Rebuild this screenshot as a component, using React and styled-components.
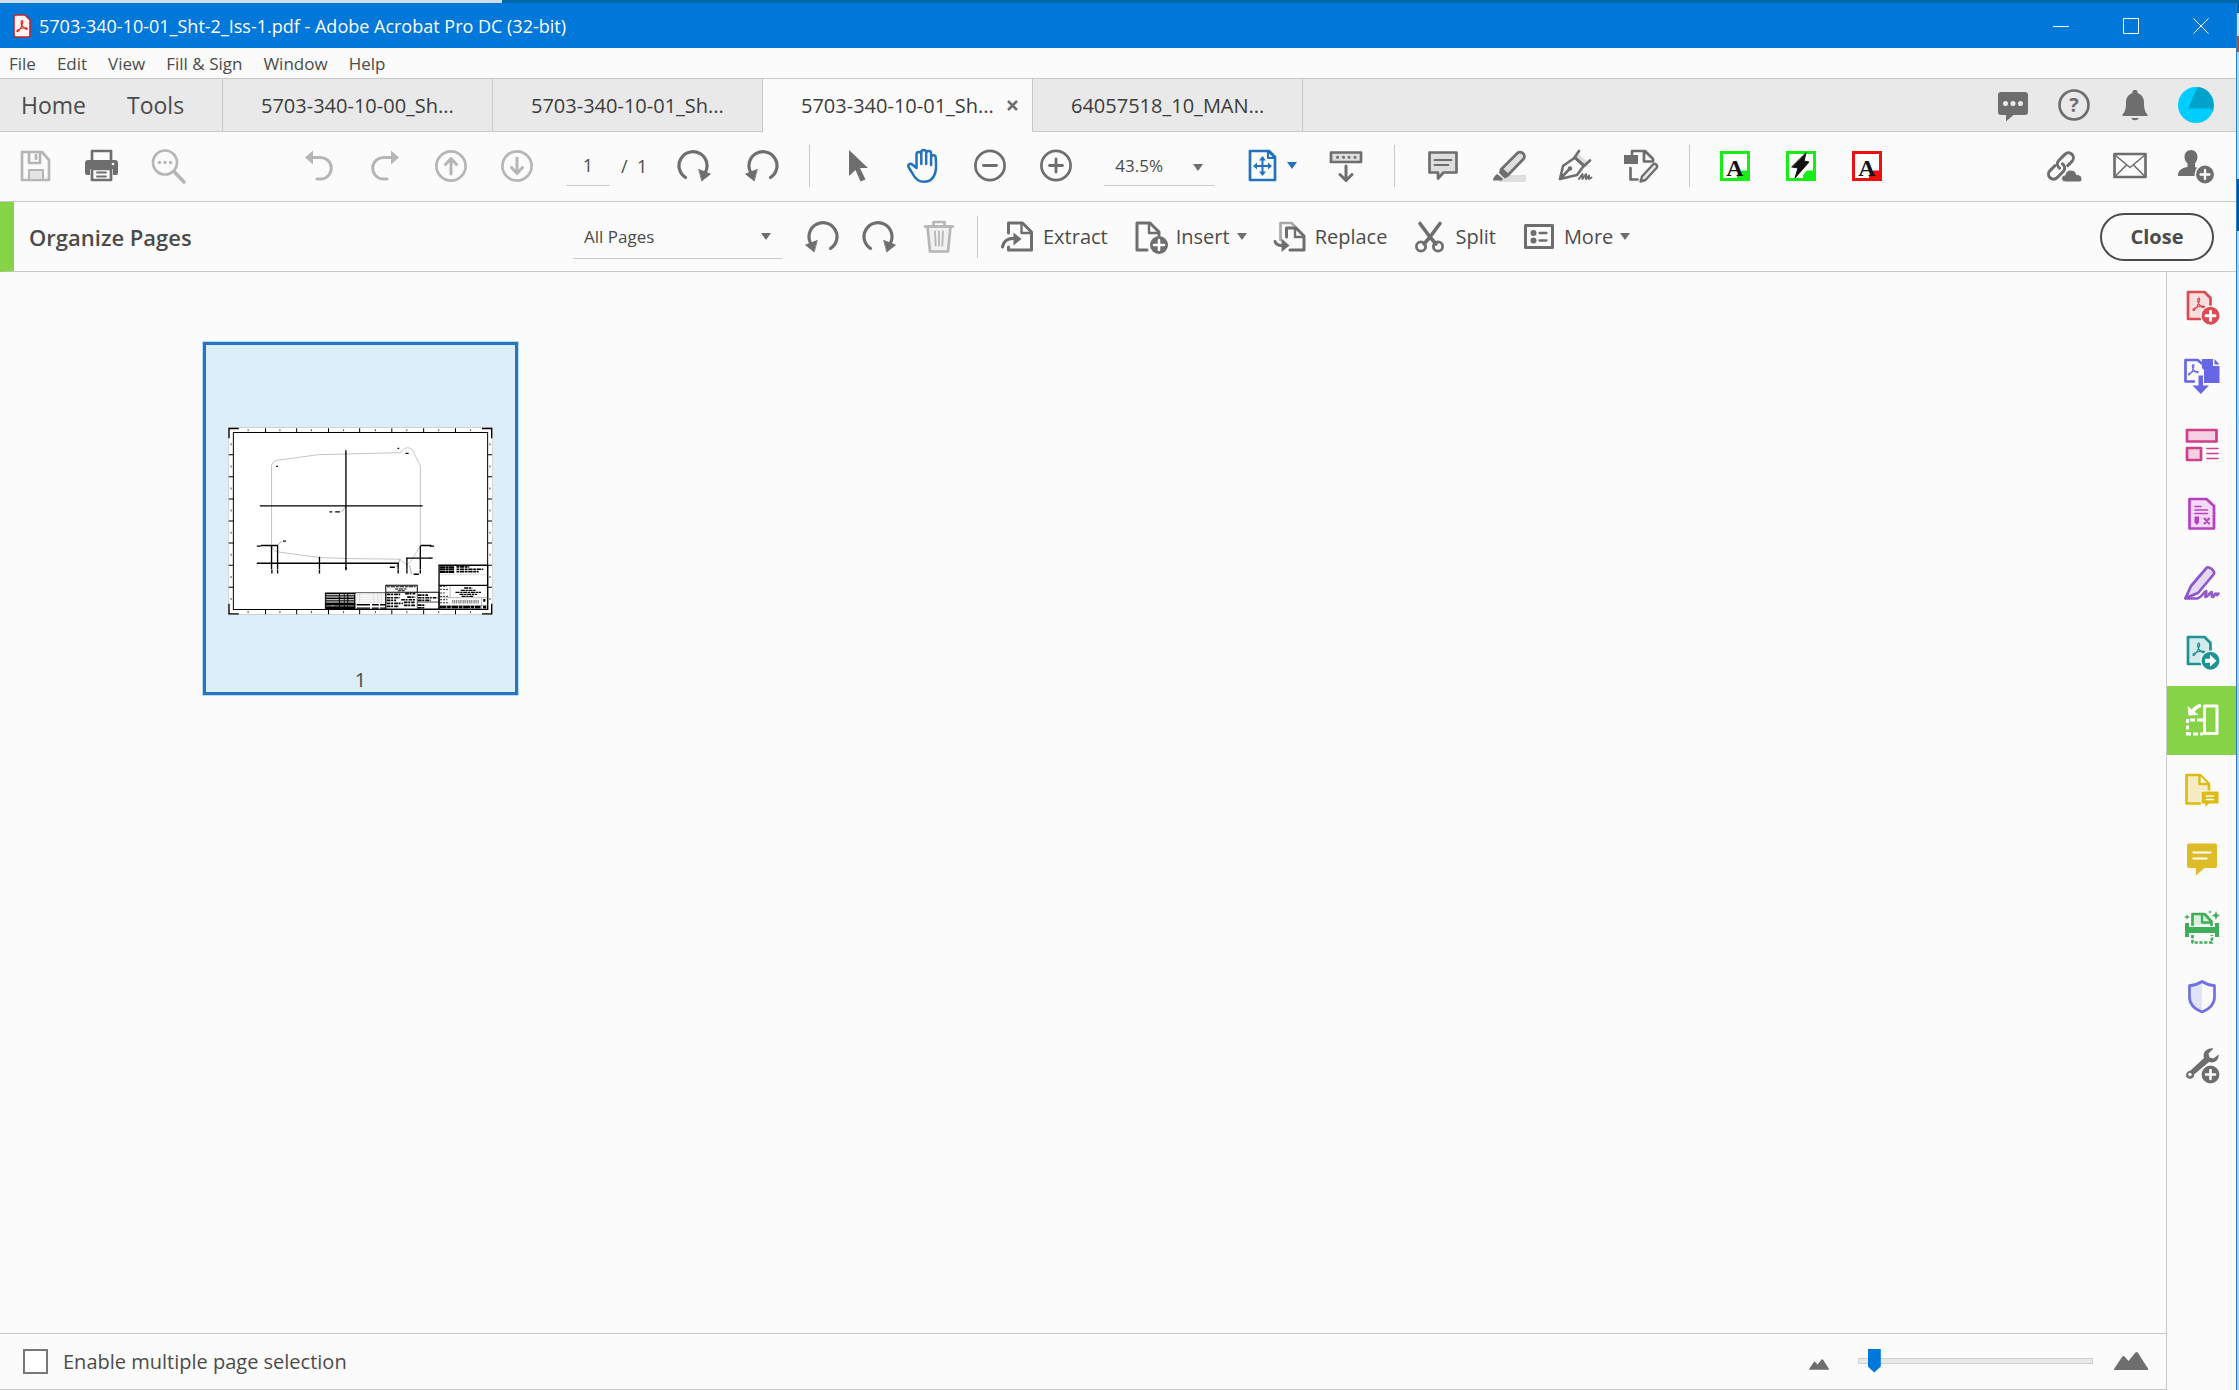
import React, { useState } from "react"
import styled, { createGlobalStyle, css } from "styled-components"

const GlobalStyle = createGlobalStyle`
  * {
    box-sizing: border-box;
  }
  body {
    margin: 0;
    background: #fbfbfb;
    color: #4b4b4b;
    font-family: "Segoe UI", "Open Sans", "Noto Sans", sans-serif;
  }
  button,
  input,
  select {
    font: inherit;
    color: inherit;
  }
`

/* ---------- icons ---------- */

const GREY = "#6e6e6e"
const PALE = "#b6b6b6"

const Icon = ({ children, color = GREY, size = 36 }) => (
  <svg
    width={size}
    height={size}
    viewBox="0 0 36 36"
    fill="none"
    stroke={color}
    strokeWidth="2.7"
    strokeLinecap="round"
    strokeLinejoin="round"
    aria-hidden="true"
  >
    {children}
  </svg>
)

const Caret = ({ color = GREY }) => (
  <svg width="10" height="7" viewBox="0 0 10 7" aria-hidden="true">
    <path d="M0 0h10L5 7z" fill={color} />
  </svg>
)

// the three looped Acrobat mark, drawn in a 14 x 14 field
const AcrobatMark = ({ x, y, scale = 1 }) => (
  <path
    transform={`translate(${x} ${y}) scale(${scale})`}
    strokeWidth="1.3"
    d="M6 1.2c1.2-1.4 2 .2 1.4 2.2C6.6 6.6 4.6 10.5 2.4 12.6c-1.6 1-2-.6-.4-1.6C4.4 9.5 8 8.5 11 8.6c2.4.2 2 2 .2 1.6C8.6 9.4 6 6 5.8 3.6c-.2-1 0-1.8.2-2.4z"
  />
)

const Save = () => (
  <Icon color={PALE}>
    <path d="M4 4h20l7 8v20H4z" />
    <path d="M11 4v11h11V4M18 7v4" />
    <path d="M11 32V22h14v10z" fill="#e4e4e4" strokeWidth="2" />
  </Icon>
)

const Print = () => (
  <Icon>
    <path d="M8 12V3h19v9" />
    <path
      d="M4 12h27a3 3 0 0 1 3 3v10a2 2 0 0 1-2 2h-3v-6H6v6H3a2 2 0 0 1-2-2V15a3 3 0 0 1 3-3z"
      fill={GREY}
      stroke="none"
    />
    <path d="M8 21h19v11H8z" />
    <path d="M13 24.5h9M13 28.5h9" strokeWidth="1.8" />
    <circle cx="29" cy="16" r="1.3" fill="#fff" stroke="none" />
  </Icon>
)

const Find = () => (
  <Icon color={PALE}>
    <circle cx="15" cy="14.5" r="12" />
    <path d="M24 23.5L34 34" strokeWidth="3.6" />
    <g fill={PALE} stroke="none">
      <circle cx="9.5" cy="14.5" r="1.7" />
      <circle cx="15" cy="14.5" r="1.7" />
      <circle cx="20.5" cy="14.5" r="1.7" />
    </g>
  </Icon>
)

const Undo = ({ flip }) => (
  <Icon color={PALE}>
    <g transform={flip ? "matrix(-1 0 0 1 36 0)" : undefined}>
      <path d="M9 9.5h9.5a10.5 10.5 0 0 1 2 21.5H16" strokeWidth="3" />
      <path d="M4 9.5L12 2.5v14z" fill={PALE} stroke="none" />
    </g>
  </Icon>
)

const CircleArrow = ({ down }) => (
  <Icon color={PALE}>
    <circle cx="18" cy="18" r="14.6" />
    <path
      d={down ? "M18 10v15M12.5 19.5L18 25.5l5.5-6" : "M18 26V11M12.5 16.5L18 10.5l5.5 6"}
      strokeWidth="3"
    />
  </Icon>
)

const Rotate = ({ left }) => (
  <Icon>
    <g transform={left ? "matrix(-1 0 0 1 36 0)" : undefined}>
      <path d="M8.5 29.5A14 14 0 1 1 28.5 24" strokeWidth="3.2" />
      <path d="M22 21.5L33.5 26 25 32.8z" fill={GREY} strokeWidth=".8" />
    </g>
  </Icon>
)

const Pointer = () => (
  <Icon>
    <path d="M9 2l19 18h-8l5.5 11.5-5 2-5-11.5L9 28z" fill={GREY} stroke="none" />
  </Icon>
)

const Hand = () => (
  <Icon color="#2272bf">
    <path
      strokeWidth="2.5"
      d="M10.5 20V6.5a2.4 2.4 0 0 1 4.8 0V16V4.5a2.4 2.4 0 0 1 4.9 0V16V5.5a2.4 2.4 0 0 1 4.9 0V17V9.5a2.3 2.3 0 0 1 4.6 0c.4 5 1 11-.7 16-1.6 5-5.5 8.3-11 8.3-6 0-9-3.3-11.5-8.3L2.5 19c-1-2.6 2-4.2 4-2.2z"
    />
  </Icon>
)

const Zoom = ({ plus }) => (
  <Icon>
    <circle cx="18" cy="17.5" r="14.6" />
    <path d={plus ? "M11.5 17.5h13M18 11v13" : "M11.5 17.5h13"} strokeWidth="2.8" />
  </Icon>
)

const FitPage = () => (
  <Icon color="#2272bf">
    <path d="M5 3h19l6 6v23H5z" />
    <path d="M23 3v7h7z" strokeWidth="2.2" fill="#fff" />
    <path d="M17.5 11v14M10.5 18h14" strokeWidth="2" />
    <path
      d="M17.5 8l3.5 4.5h-7zM17.5 28l3.5-4.5h-7zM8 18l4-3.5v7zM27 18l-4-3.5v7z"
      fill="#2272bf"
      stroke="none"
    />
  </Icon>
)

const ScrollMode = () => (
  <Icon>
    <path d="M3 4.5h30v9.5H3z" fill="#dedede" />
    <path d="M9.5 9.3h.1M15.5 9.3h.1M21 9.3h.1M27 9.3h.1" strokeWidth="3" />
    <path d="M18 18v13M12 26.5l6 6 6-6" strokeWidth="3" />
  </Icon>
)

const Comment = () => (
  <Icon>
    <path d="M4.5 4.5h27v20h-13L13 30.5v-6H4.5z" fill="#dedede" />
    <path d="M9.5 12h17M9.5 17h14" strokeWidth="1.8" />
  </Icon>
)

const Highlighter = () => (
  <Icon>
    <path d="M10 27h25v7H8z" fill="#dedede" stroke="none" />
    <path d="M26 5.5c3-4 10 1 6.5 5.5L17 27l-6.5-6z" fill="#dedede" />
    <path
      d="M9 20l9 8-4 2.5-6-5.5zM6.5 26l5.5 5-1 1.5H2c0-2.5 2-5.5 4.5-6.5z"
      fill={GREY}
      stroke="none"
    />
  </Icon>
)

const InkPen = () => (
  <Icon>
    <path d="M21 6l10 8-2 5-12-9z" fill="#dedede" stroke="none" />
    <path d="M3 31L6 18l12-8.5 9 8L20 27zM3 31l9-9.5" strokeWidth="2.6" />
    <path d="M22 3l-4.5 6.5 9.5 8.5 6-5.5" />
    <circle cx="13" cy="20.5" r="2.2" fill={GREY} stroke="none" />
    <path d="M22 31l3.5-5v5l3.5-5v5l3-3.5v3.5l2.5-1.5" strokeWidth="2" />
  </Icon>
)

const StampPen = () => (
  <Icon>
    <path d="M9 6V3h13l8 8v2.5h-9V3.5" />
    <path d="M1 7h14v9H1z" fill={GREY} stroke="none" />
    <path d="M7.5 20v11.5h7" />
    <path
      d="M30 16.5c2-2 5.5 1 3.5 3.5L22.5 32l-5 1.5 1.5-5z"
      fill="#e8e8e8"
      strokeWidth="2.4"
    />
  </Icon>
)

const PluginMark = ({ color, bolt }) => (
  <Icon color={color}>
    <path d="M4.5 4.5h27v27h-27z" fill="#fff" strokeLinejoin="miter" strokeWidth="3" />
    <path d="M31.5 31.5H20V27l4-4.5h7.5z" fill={color} stroke="none" />
    {bolt ? (
      <path d="M23 5l-2 8 5 1-14 16 3-10-6-1z" fill="#111" stroke="#111" strokeWidth="1" />
    ) : (
      <text
        x="18"
        y="28"
        textAnchor="middle"
        fontFamily="Liberation Serif, serif"
        fontWeight="700"
        fontSize="24"
        fill="#111"
        stroke="none"
      >
        A
      </text>
    )}
  </Icon>
)

const LinkCloud = () => (
  <Icon>
    <g transform="rotate(-45 15 18)" strokeWidth="3">
      <path d="M11 13.5H4a5 5 0 0 0 0 10h9a5 5 0 0 0 4.5-6" />
      <path d="M20 22.5h6a5 5 0 0 0 0-10h-9a5 5 0 0 0-4.5 6" />
    </g>
    <path
      d="M19 34a3.5 3.5 0 0 1 0-7c1-4 4-5 6-5 3 0 5 2 5.5 4.5C34 26.5 36 28 36 31c0 2-1 3-3 3z"
      fill={GREY}
      stroke="#fbfbfb"
      strokeWidth="1"
    />
  </Icon>
)

const Mail = () => (
  <Icon>
    <path d="M2.5 6h31v23h-31z" />
    <path d="M3 7l15 12.5L33 7M3 28.5l11-11M33 28.5l-11-11" strokeWidth="1.6" />
  </Icon>
)

const AddPerson = () => (
  <Icon>
    <path
      d="M13 2c4 0 6.5 3 6.5 7 0 3-1.5 5-2.5 6.5V19c4 1 7 2.5 7 6v3H0c0-5 2-7.5 9.5-9v-3.5C8 14 6.5 12 6.5 9c0-4 2.5-7 6.5-7z"
      fill={GREY}
      stroke="none"
    />
    <circle cx="27" cy="26.5" r="9.7" fill={GREY} stroke="#fbfbfb" strokeWidth="1.5" />
    <path d="M22.5 26.5h9M27 22v9" stroke="#fff" strokeWidth="2.3" />
  </Icon>
)

const Trash = () => (
  <Icon color={PALE}>
    <path d="M6.5 7.5l2.5 25h18l2.5-25z" fill="#f0f0f0" />
    <path d="M4 7.5h28M12.5 7V3h11v4" />
    <path d="M14 12.5l.7 14M18 12.5v14M22 12.5l-.7 14" strokeWidth="1.8" />
  </Icon>
)

const Extract = () => (
  <Icon>
    <path d="M8.5 14V4h14l9 9v18h-23v-3" strokeWidth="3" />
    <path d="M21.5 4.5v9.5h9.5" strokeWidth="2.4" />
    <path d="M2.5 28c1-6 6-9 12-8.5" strokeWidth="3.2" />
    <path d="M13.5 13.5L21.5 20l-8 6.5z" fill={GREY} stroke="none" />
  </Icon>
)

const Insert = () => (
  <Icon>
    <path d="M14 31H4V4h13l9 9v3" strokeWidth="3" />
    <path d="M16 4.5V14h9.5" strokeWidth="2.4" />
    <circle cx="26" cy="26" r="9" fill={GREY} stroke="none" />
    <path d="M21 26h10M26 21v10" stroke="#fff" strokeWidth="2.6" />
  </Icon>
)

const Replace = () => (
  <Icon>
    <path d="M8.5 21V4h11l4 4" stroke="#a8a8a8" />
    <path d="M14.5 18v-9h9.5l8 8v14H18" strokeWidth="3" />
    <path d="M23 9.5v8.5h8.5" strokeWidth="2.4" />
    <path d="M3 22.5c1 3 4 4 7 4" strokeWidth="3" />
    <path d="M9.5 19.5l8 7-8 6.5z" fill={GREY} stroke="none" />
  </Icon>
)

const Split = () => (
  <Icon>
    <path d="M8 4.5L18 18l6 7M28 4.5L18 18l-6 7" strokeWidth="3.6" />
    <circle cx="9" cy="27.5" r="4.6" strokeWidth="2.8" />
    <circle cx="26" cy="27.5" r="4.6" strokeWidth="2.8" />
  </Icon>
)

const More = () => (
  <Icon>
    <path d="M4.5 6.5h27v22h-27z" strokeWidth="3" />
    <path d="M18.5 14h7M18.5 21.5h7" strokeWidth="2.3" />
    <circle cx="12.5" cy="14" r="3" fill={GREY} stroke="none" />
    <circle cx="12.5" cy="21.5" r="3" fill={GREY} stroke="none" />
  </Icon>
)

const Chat = () => (
  <Icon>
    <path
      d="M6 5h24q3 0 3 3v17q0 3-3 3H18.5L11 34.5V28H6q-3 0-3-3V8q0-3 3-3z"
      fill={GREY}
      stroke="none"
    />
    <g fill="#ececec" stroke="none">
      <circle cx="10.5" cy="16.5" r="2.5" />
      <circle cx="18" cy="16.5" r="2.5" />
      <circle cx="25.5" cy="16.5" r="2.5" />
    </g>
  </Icon>
)

const Help = () => (
  <Icon>
    <circle cx="18" cy="18" r="14.5" />
    <text
      x="18"
      y="25"
      textAnchor="middle"
      fontFamily="Open Sans, sans-serif"
      fontWeight="700"
      fontSize="20"
      fill={GREY}
      stroke="none"
    >
      ?
    </text>
  </Icon>
)

const Bell = () => (
  <Icon>
    <path
      d="M15.5 4.5c0-2 5-2 5 0V6c5 2 6.5 5 6.5 10 0 6 1 9 3.5 11.5V29h-25v-1.5C8 25 9 22 9 16c0-5 1.5-8 6.5-10zM14.5 31h7c0 3-7 3-7 0z"
      fill={GREY}
      stroke="none"
    />
  </Icon>
)

const AvatarMark = () => (
  <Icon>
    <circle cx="18" cy="18" r="18" fill="#00cdff" stroke="none" />
    <path d="M10 21.5L19.5 0C32 1 37.5 13 35 24l-2-2.5z" fill="#00a4cb" stroke="none" />
  </Icon>
)

const CreatePdf = () => (
  <Icon color="#dc4a52">
    <path d="M4 3h16.5l6 6v21H4z" fill="#f9dddf" />
    <AcrobatMark x="8" y="8.5" />
    <circle cx="26.5" cy="26.7" r="9.6" fill="#dc4a52" stroke="#fbfbfb" strokeWidth="1.3" />
    <path d="M22 26.7h9M26.5 22.2v9" stroke="#fff" strokeWidth="3" />
  </Icon>
)

const CombinePdf = () => (
  <Icon color="#6666e6">
    <path d="M10 23.5H1.5V2h12l5 4" />
    <AcrobatMark x="3.5" y="6" scale={0.85} />
    <path d="M18 1h11v7h6.5v17H20V12l-2-2zM30.5 1l5 5.5h-5z" fill="#6666e6" stroke="none" />
    <path d="M14.5 17.5H19v10h6L16.8 36l-8.3-8.5h6z" fill="#6666e6" stroke="none" />
  </Icon>
)

const EditPdf = () => (
  <Icon color="#cf3f8c">
    <path d="M3 3h29.5v11.5H3zM3 21h14v12H3z" fill="#f4d0e3" />
    <path d="M23 21.5h11M23 26.5h11M23 31.5h11" strokeWidth="1.6" />
  </Icon>
)

const PrepareForm = () => (
  <Icon color="#b83fc4">
    <path d="M5.5 3h17l7.5 7v22.5H5.5z" fill="#f3daf6" />
    <path d="M11 10.5h6M11 14h12.5M11 17.5h12.5" strokeWidth="1.5" />
    <path d="M10.5 20.5h4.5v6L12.8 29l-2.3-2.5z" fill="#b83fc4" stroke="none" />
    <path d="M20.5 22.5l4.5 5M25 22.5l-4.5 5" strokeWidth="2" />
  </Icon>
)

const FillSign = () => (
  <Icon color="#8e57cc">
    <path d="M1.5 33L7 21 22.5 3c2-2.5 9.5 3 7 6.5L14 28z" fill="#e6d9f4" />
    <path
      d="M1.5 33.5h11c5 0 8-8 9.5-7.5 1.5.7-2 6 0 6s4-5.5 5.5-5-1 5 1 5 2-4 3.5-3.5 0 3.5 2.5 0"
      strokeWidth="2.6"
    />
  </Icon>
)

const ExportPdf = () => (
  <Icon color="#1f9296">
    <path d="M4 3h16.5l6 6v21H4z" fill="#d3ebeb" />
    <AcrobatMark x="8" y="8.5" />
    <circle cx="26.5" cy="26.7" r="9.6" fill="#1f9296" stroke="#fbfbfb" strokeWidth="1.3" />
    <path d="M21 24.7h5v-4l6.5 6-6.5 6v-4h-5z" fill="#fff" stroke="none" />
  </Icon>
)

const Organize = () => (
  <Icon color="#fff">
    <path d="M20.5 3H33v27.5H20.5z" strokeWidth="3" />
    <path
      d="M3.5 16v4M3.5 22.5v4M3.5 29v3M2 31h5M9 31h5M16 31h3M6 17h5M13 17h6"
      strokeLinecap="butt"
      strokeWidth="3"
    />
    <path d="M17 2.5C13 3 11 5 8.5 8.5" strokeWidth="3.6" strokeLinecap="butt" />
    <path d="M3.5 3l1 9.5 10-.5z" fill="#fff" stroke="none" />
  </Icon>
)

const SendComments = () => (
  <Icon color="#dfba10">
    <path d="M16 31.5H2.5V3H16l9 9v7" fill="#f5ebc2" />
    <path d="M15.5 3.5V12H24" strokeWidth="2.4" fill="#fff" />
    <path
      d="M18.5 19h15q1.5 0 1.5 1.5v10q0 1.5-1.5 1.5H25l-4 4v-4h-2.5q-1.5 0-1.5-1.5v-10q0-1.5 1.5-1.5z"
      fill="#dfba10"
      stroke="#fbfbfb"
      strokeWidth="1"
    />
    <path d="M22.5 24h7M22.5 27.5h7" stroke="#fff" strokeWidth="1.7" />
  </Icon>
)

const CommentTool = () => (
  <Icon color="#dfbb28">
    <path
      d="M5 2.5h26q2 0 2 2V25q0 2-2 2H20.5L12 34.5V27H5q-2 0-2-2V4.5q0-2 2-2z"
      fill="#dfbb28"
      stroke="none"
    />
    <path d="M9.5 11.5h17M9.5 17.5h13" stroke="#fff" strokeWidth="2.2" />
  </Icon>
)

const ScanOcr = () => (
  <Icon color="#3fae58">
    <path d="M8.5 15V4h12l7 7.5V15" fill="#d6efdb" />
    <path d="M18 4.5v8h8.5" strokeWidth="2.3" />
    <path d="M1 13h4v4h26v-4h4v14h-4v-4H5v4H1z" fill="#3fae58" stroke="none" />
    <path d="M8.5 25v7.5H28V25" strokeDasharray="3.2 1.6" strokeLinecap="butt" />
    <path
      d="M32 1l1.2 3.3L36 5.5l-2.8 1.2L32 10l-1.2-3.3-3.3-1.2 3.3-1.2zM26 0l.6 1.4L28 2l-1.4.6L26 4l-.6-1.4L24 2l1.4-.6zM3 4l.7 2L6 7l-2.3 1L3 10l-.7-2L0 7l2.3-1z"
      fill="#3fae58"
      stroke="none"
    />
  </Icon>
)

const Protect = () => (
  <Icon color="#7070e0">
    <path d="M18 3v30C10 29 5 25 5 18V7c5 0 9-1.5 13-4z" fill="#e2e2f8" stroke="none" />
    <path d="M18 2.5c4 2.5 8 4 12.5 4.2V18c0 7-5 12-12.5 15C10.5 30 5.5 25 5.5 18V6.7C10 6.5 14 5 18 2.5z" />
  </Icon>
)

const MoreTools = () => (
  <Icon>
    <path
      transform="translate(1 -1)"
      d="M28.5 1.5l-5 5 1 4 4 1 5-4c1 5-4 9.5-9.5 7.5L9 27.5c1 4-5 6-7.5 2.5-1.5-3 1-6 4-6.5L19 11c-2-6 4-10.5 9.5-9.5z"
      fill={GREY}
      stroke="none"
    />
    <circle cx="6" cy="26.5" r="1.7" fill="#fbfbfb" stroke="none" />
    <circle cx="26.5" cy="26.5" r="9.6" fill={GREY} stroke="#fbfbfb" strokeWidth="1.3" />
    <path d="M22 26.5h9M26.5 22v9" stroke="#fff" strokeWidth="2.6" />
  </Icon>
)

const AppMark = () => (
  <svg width="18" height="24" viewBox="0 0 18 24" fill="none" aria-hidden="true">
    <path
      d="M3 1h9l5 5v15q0 2-2 2H3q-2 0-2-2V3q0-2 2-2z"
      fill="#fff5f3"
      stroke="#c3252c"
      strokeWidth="1.6"
    />
    <g stroke="#e1251b" strokeLinecap="round">
      <AcrobatMark x="3" y="6" scale={0.9} />
    </g>
  </svg>
)

const Mountains = ({ width, height }) => (
  <svg width={width} height={height} viewBox="0 0 34 18" aria-hidden="true">
    <path d="M0 18v-1L8 5q1.5-2 3 0l3.5 4L21 1q1.5-2 3 0l10 15.500V18z" fill={GREY} />
  </svg>
)

const WindowGlyph = ({ d }) => (
  <svg width="16" height="16" viewBox="0 0 16 16" fill="none" stroke="#fff" aria-hidden="true">
    <path d={d} />
  </svg>
)

/* the engineering sheet shown in the page thumbnail */
const Drawing = () => {
  const across = [227, 320, 415, 508, 604, 699, 794]
  const down = [373, 439, 505, 571, 637, 703, 769]
  return (
    <svg
      width="265"
      height="188"
      viewBox="115 291 791 560"
      fill="none"
      stroke="#000"
      aria-label="Page 1 drawing"
      role="img"
    >
      <path d="M115 291h791v560H115z" fill="#fff" stroke="#c4c4c4" strokeWidth="4" />
      <path d="M131 307h759v528H131z" strokeWidth="3" />
      <path d="M147 295H118v29M873 295h29v29M118 818v30h29M902 818v30h-29" strokeWidth="4" />
      {across.map((x) => (
        <path key={x} d={`M${x} 294v13M${x} 835v14`} strokeWidth="3" />
      ))}
      {down.map((y) => (
        <path key={y} d={`M117 ${y}h14M890 ${y}h13`} strokeWidth="3" />
      ))}
      {[175, 270, 364, 460, 555, 649, 744, 839].map((x) => (
        <path key={x} d={`M${x} 297v6M${x} 840v6`} strokeWidth="3" stroke="#555" />
      ))}
      {[342, 408, 474, 540, 606, 672, 738, 804].map((y) => (
        <path key={y} d={`M124 ${y - 3}v6M897 ${y - 3}v6`} strokeWidth="4" stroke="#777" />
      ))}
      <path
        d="M245 640V405q2-12 15-15l125-17 82-2 163-4q10-14 20-15 12 0 18 12l21 42v240l-28 45-12 12-18-15-5-3-160-2-78-3-125-17q-18-4-18-23z"
        stroke="#a8a8a8"
        strokeWidth="2"
      />
      <path
        d="M467 360v356M210 526h486M213 644h51M245 644v70M263 644v70M213 697h410M388 678v36M623 695v20M649 682v34M646 682h74M689 645v69M690 644h32"
        strokeWidth="4"
      />
      <path d="M467 527l-13 17M263 644l12-13M657 703l6 27M617 709l12-24" strokeWidth="1" />
      <path
        d="M418 544h8M435 544h14M279 631h9M201 646h12M201 697h12M718 646h12M716 682h10M598 709h15M669 730h16M246 716v12M263 716v12M388 716v12M467 708v10M623 716v12M649 716v12M689 716v12M621 354h5M645 369h9M259 408h5"
        strokeWidth="4"
      />
      {/* revision table */}
      <path d="M405 785h89v49h-89z" fill="#000" />
      <path
        d="M408 791h84M408 798h84M408 806h84M408 813h84M408 824h84"
        stroke="#fff"
        strokeWidth="3"
        strokeDasharray="38 3 12 2 8 3"
      />
      <path d="M494 785h92v49h-92z" strokeWidth="2" />
      <path
        d="M495 792h90M495 799h90M495 806h90M495 813h90M508 786v32M550 786v32M562 786v32M573 786v32"
        stroke="#c9c9c9"
        strokeWidth="1.5"
      />
      <path d="M405 821h181M405 831h181" strokeWidth="4" strokeDasharray="20 4 40 6" />
      {/* notes */}
      <path d="M586 763h94v21h-94zM586 784h159v50H586z" strokeWidth="3" />
      <path d="M589 767h86M614 774h34M622 779h20" strokeWidth="3" strokeDasharray="9 2 14 2" />
      <path
        d="M589 790h40M644 788h30M589 800h38M650 798h24M589 808h28M632 806h42M589 817h48M640 814h32M589 826h36M640 823h34M682 792h30M682 800h58M682 808h38M682 822h22M682 830h20"
        strokeWidth="5"
        strokeDasharray="11 2 6 3"
      />
      <path d="M680 784v50M680 813h65" strokeWidth="2" />
      {/* title block */}
      <path d="M745 703h145v60H745zM745 763h145v72H745z" strokeWidth="4" />
      <path d="M747 709h44M747 716h44M747 723h44" strokeWidth="6" strokeDasharray="16 1 9 1" />
      <path d="M797 708h38M797 715h80M797 722h66" strokeWidth="5" strokeDasharray="8 2 13 2" />
      <path d="M747 731h142" strokeWidth="1" stroke="#aaa" />
      <path
        d="M820 771h24M810 778h44M794 784h76M806 790h52M812 796h36"
        strokeWidth="4"
        strokeDasharray="12 2 7 2"
      />
      <path d="M778 765v35M745 800h145M745 823h145M872 800v34" strokeWidth="1.5" stroke="#777" />
      <path
        d="M748 766h20M748 775h24M748 786h14M748 796h26M748 806h22M748 815h28"
        strokeWidth="2.5"
        strokeDasharray="6 3"
      />
      <path d="M747 828h122M876 828h10M877 808h6" strokeWidth="8" strokeDasharray="20 2 11 2" />
      <path d="M784 812h80" stroke="#888" strokeWidth="10" strokeDasharray="4 2 3 2" />
    </svg>
  )
}

/* ---------- layout ---------- */

const Desktop = styled.div`
  display: flex;
  flex-direction: column;
  min-height: 100vh;
`
const DesktopTop = styled.div`
  height: 3px;
  background: linear-gradient(to right, #d3dde5 22.4%, #0068a6 22.4%);
`
const DesktopRow = styled.div`
  flex: 1;
  display: flex;
`
const DesktopEdge = styled.div`
  width: 3px;
  border-left: 1px solid #2a7fc6;
  background: linear-gradient(
    #0068a6 10px,
    #c8dbe8 10px 33px,
    #b5502a 33px 49px,
    #bcd6e8 49px 176px,
    #00569e 176px 228px,
    #bcd0de 228px 416px,
    #b3cfe4 416px
  );
`
const Window = styled.div`
  flex: 1;
  min-width: 0;
  display: flex;
  flex-direction: column;
`

const plainButton = css`
  display: flex;
  align-items: center;
  justify-content: center;
  padding: 0;
  border: 0;
  background: none;
`

const TitleBar = styled.header`
  height: 45px;
  padding-left: 13px;
  display: flex;
  align-items: center;
  gap: 8px;
  background: #0078d9;
  color: #fff;
`
const WindowTitle = styled.h1`
  flex: 1;
  margin: 0;
  font-size: 18px;
  font-weight: 400;
`
const WindowButton = styled.button`
  ${plainButton}
  width: 70px;
  height: 45px;
`

const MenuBar = styled.nav`
  height: 30px;
  padding-left: 9px;
  display: flex;
  align-items: center;
  gap: 21px;
`
const MenuButton = styled.button`
  ${plainButton}
  font-size: 17px;
`

const TabBar = styled.div`
  height: 54px;
  display: flex;
  background: #e9e9e9;
  border-top: 1px solid #c8c8c8;
`
const TabRest = styled.div`
  flex: 1;
  padding-right: 22px;
  display: flex;
  align-items: center;
  justify-content: flex-end;
  gap: 25px;
  border-bottom: 1px solid #c8c8c8;
`
const HomeTabs = styled.div`
  width: 223px;
  padding-left: 21px;
  display: flex;
  gap: 41px;
  border-right: 1px solid #c8c8c8;
  border-bottom: 1px solid #c8c8c8;
`
const HomeTab = styled.button`
  ${plainButton}
  font-size: 23px;
`
const FileTab = styled.div`
  width: 270px;
  padding-left: 38px;
  display: flex;
  align-items: center;
  gap: 13px;
  border-right: 1px solid #c8c8c8;
  border-bottom: 1px solid ${(props) => (props.$active ? "#fbfbfb" : "#c8c8c8")};
  background: ${(props) => (props.$active ? "#fbfbfb" : "transparent")};
`
const FileTabName = styled.button`
  ${plainButton}
  font-size: 20px;
  color: #3c3c3c;
`
const TabClose = styled.button`
  ${plainButton}
  width: 12px;
`
const RoundButton = styled.button`
  ${plainButton}
  width: 36px;
`

const Toolbar = styled.div`
  height: 70px;
  padding: 0 7px 2px 3px;
  display: flex;
  align-items: center;
  border-bottom: 1px solid #c8c8c8;
`
const ToolButton = styled.button`
  ${plainButton}
  gap: 6px;
  width: ${(props) => (props.$wide ? "84px" : "66px")};
  height: 48px;
`
const ToolGroup = styled.div`
  display: flex;
  align-items: center;
  margin-left: ${(props) => (props.$pushed ? "auto" : "0")};
`
const FileTools = styled(ToolGroup)`
  width: 283px;
`
const Divider = styled.div`
  width: 1px;
  height: 42px;
  margin: 0 ${(props) => (props.$tight ? "12px" : "15px")} 0 15px;
  background: #c8c8c8;
`
const PageField = styled.label`
  margin: 0 15px 0 16px;
  display: flex;
  align-items: center;
  gap: 11px;
  font-size: 18px;
  white-space: pre;
`
const PageInput = styled.input`
  width: 44px;
  height: 40px;
  padding: 0;
  border: 0;
  border-bottom: 1px solid #c8c8c8;
  background: none;
  text-align: center;
`
const SelectBox = styled.div`
  position: relative;
  flex: none;

  svg {
    position: absolute;
    right: 11px;
    top: 18px;
    pointer-events: none;
  }
`
const ZoomBox = styled(SelectBox)`
  width: 110px;
  margin: 0 15px;
`
const RangeBox = styled(SelectBox)`
  width: 209px;
`
const Select = styled.select`
  width: 100%;
  height: ${(props) => (props.$tall ? "44px" : "40px")};
  padding: 0 24px 0 11px;
  border: 0;
  border-bottom: 1px solid #c8c8c8;
  border-radius: 0;
  background: none;
  appearance: none;
  font-size: 17px;
`

const OrganizeBar = styled.div`
  height: 70px;
  padding-right: 22px;
  display: flex;
  align-items: center;
  border-bottom: 1px solid #c8c8c8;
  border-left: 14px solid #86d347;
`
const OrganizeTitle = styled.h2`
  width: 559px;
  margin: 0;
  padding-left: 15px;
  font-size: 22px;
  font-weight: 600;
`
const OrganizeIcons = styled.div`
  margin: 0 5px 0 21px;
  display: flex;
  gap: 23px;
`
const Actions = styled.div`
  margin-left: 7px;
  display: flex;
  gap: 25px;
`
const ActionButton = styled.button`
  ${plainButton}
  gap: 7px;
  font-size: 20px;
`
const CloseButton = styled.button`
  ${plainButton}
  width: 114px;
  height: 48px;
  margin-left: auto;
  border: 2px solid #4b4b4b;
  border-radius: 24px;
  font-size: 20px;
  font-weight: 700;
`

const Body = styled.div`
  flex: 1;
  display: flex;
`
const Content = styled.div`
  flex: 1;
  display: flex;
  flex-direction: column;
`
const PageGrid = styled.main`
  flex: 1;
  padding: 69px 202px;
  display: flex;
  flex-wrap: wrap;
  align-items: flex-start;
`
const PageTile = styled.button`
  width: 317px;
  padding: 82px 0 0;
  display: flex;
  flex-direction: column;
  align-items: center;
  border: 4px solid #2874bf;
  outline: 1px solid #b9dcf3;
  outline-offset: -1px;
  background: #dceefa;

  svg {
    flex: none;
  }
`
const PageNumber = styled.span`
  margin-top: 53px;
  font-size: 20px;
  line-height: 24px;
`
const BottomBar = styled.footer`
  height: 57px;
  padding: 0 18px 0 23px;
  display: flex;
  align-items: center;
  border-top: 1px solid #c8c8c8;
  border-bottom: 1px solid #c8c8c8;
`
const CheckLabel = styled.label`
  flex: 1;
  display: flex;
  align-items: center;
  gap: 15px;
  font-size: 20px;
`
const CheckBox = styled.input`
  width: 25px;
  height: 25px;
  margin: 0;
  appearance: none;
  border: 2px solid #777;
  background: #fff;

  &:checked {
    background: #777;
  }
`
const SizeControl = styled.div`
  padding-bottom: 2px;
  display: flex;
  align-items: center;
`
const SmallSize = styled.span`
  display: flex;
  margin: 8px 29px 0 0;
`
const LargeSize = styled.span`
  display: flex;
  margin-left: 21px;
`
const SizeSlider = styled.input`
  width: 235px;
  height: 24px;
  margin: 0;
  appearance: none;
  background: none;

  &::-webkit-slider-runnable-track {
    height: 6px;
    background: #e8e8e8;
    border: 1px solid #d0d0d0;
  }
  &::-webkit-slider-thumb {
    appearance: none;
    width: 13px;
    height: 24px;
    margin-top: -10px;
    background: #0078d9;
    clip-path: polygon(0 0, 100% 0, 100% 75%, 50% 100%, 0 75%);
  }
`
const Rail = styled.aside`
  width: 70px;
  border-left: 1px solid #c8c8c8;
`
const RailButton = styled.button`
  ${plainButton}
  width: 69px;
  height: 69px;
  background: ${(props) => (props.$active ? "#86d347" : "none")};
`

const menus = ["File", "Edit", "View", "Fill & Sign", "Window", "Help"]

const tabs = [
  { name: "5703-340-10-00_Sh..." },
  { name: "5703-340-10-01_Sh..." },
  { name: "5703-340-10-01_Sh...", active: true },
  { name: "64057518_10_MAN..." },
]

const railTools = [
  ["Create PDF", CreatePdf],
  ["Combine Files", CombinePdf],
  ["Edit PDF", EditPdf],
  ["Prepare Form", PrepareForm],
  ["Fill & Sign", FillSign],
  ["Export PDF", ExportPdf],
  ["Organize Pages", Organize],
  ["Send for Comments", SendComments],
  ["Comment", CommentTool],
  ["Scan & OCR", ScanOcr],
  ["Protect", Protect],
  ["More Tools", MoreTools],
]

const Tool = ({ label, children, ...rest }) => (
  <ToolButton type="button" aria-label={label} {...rest}>
    {children}
  </ToolButton>
)

const App = () => {
  const [page, setPage] = useState("1")
  const [multiple, setMultiple] = useState(false)
  const [size, setSize] = useState(4)

  return (
    <Desktop>
      <GlobalStyle />
      <DesktopTop />
      <DesktopRow>
        <Window>
          <TitleBar>
            <AppMark />
            <WindowTitle>5703-340-10-01_Sht-2_Iss-1.pdf - Adobe Acrobat Pro DC (32-bit)</WindowTitle>
            <ToolGroup>
              <WindowButton type="button" aria-label="Minimize">
                <WindowGlyph d="M0 8.5h16" />
              </WindowButton>
              <WindowButton type="button" aria-label="Maximize">
                <WindowGlyph d="M.5 .5h15v15H.5z" />
              </WindowButton>
              <WindowButton type="button" aria-label="Close window">
                <WindowGlyph d="M.5 .5l15 15M15.5 .5l-15 15" />
              </WindowButton>
            </ToolGroup>
          </TitleBar>

          <MenuBar>
            {menus.map((name) => (
              <MenuButton type="button" key={name}>
                {name}
              </MenuButton>
            ))}
          </MenuBar>

          <TabBar>
            <HomeTabs>
              <HomeTab type="button">Home</HomeTab>
              <HomeTab type="button">Tools</HomeTab>
            </HomeTabs>
            {tabs.map((tab, i) => (
              <FileTab key={i} $active={tab.active}>
                <FileTabName type="button">{tab.name}</FileTabName>
                {tab.active && (
                  <TabClose type="button" aria-label="Close tab">
                    <svg width="11" height="11" viewBox="0 0 11 11" stroke={GREY} strokeWidth="2.5">
                      <path d="M1 1l9 9M10 1l-9 9" />
                    </svg>
                  </TabClose>
                )}
              </FileTab>
            ))}
            <TabRest>
              <RoundButton type="button" aria-label="Messages">
                <Chat />
              </RoundButton>
              <RoundButton type="button" aria-label="Help">
                <Help />
              </RoundButton>
              <RoundButton type="button" aria-label="Notifications">
                <Bell />
              </RoundButton>
              <RoundButton type="button" aria-label="Account">
                <AvatarMark />
              </RoundButton>
            </TabRest>
          </TabBar>

          <Toolbar>
            <FileTools>
              <Tool label="Save">
                <Save />
              </Tool>
              <Tool label="Print">
                <Print />
              </Tool>
              <Tool label="Find">
                <Find />
              </Tool>
            </FileTools>
            <Tool label="Undo">
              <Undo />
            </Tool>
            <Tool label="Redo">
              <Undo flip />
            </Tool>
            <Tool label="Previous page">
              <CircleArrow />
            </Tool>
            <Tool label="Next page">
              <CircleArrow down />
            </Tool>
            <PageField>
              <PageInput aria-label="Page" value={page} onChange={(e) => setPage(e.target.value)} />
              {"/  1"}
            </PageField>
            <Tool label="Rotate clockwise">
              <Rotate />
            </Tool>
            <Tool label="Rotate counterclockwise">
              <Rotate left />
            </Tool>
            <Divider />
            <Tool label="Select">
              <Pointer />
            </Tool>
            <Tool label="Hand">
              <Hand />
            </Tool>
            <Tool label="Zoom out">
              <Zoom />
            </Tool>
            <Tool label="Zoom in">
              <Zoom plus />
            </Tool>
            <ZoomBox>
              <Select aria-label="Zoom level" defaultValue="43.5%">
                <option>43.5%</option>
                <option>100%</option>
              </Select>
              <Caret />
            </ZoomBox>
            <Tool label="Fit page" $wide>
              <FitPage />
              <Caret color="#2272bf" />
            </Tool>
            <Tool label="Scrolling">
              <ScrollMode />
            </Tool>
            <Divider />
            <Tool label="Add comment">
              <Comment />
            </Tool>
            <Tool label="Highlight">
              <Highlighter />
            </Tool>
            <Tool label="Sign">
              <InkPen />
            </Tool>
            <Tool label="Stamp">
              <StampPen />
            </Tool>
            <Divider $tight />
            <Tool label="Check text">
              <PluginMark color="#16ee16" />
            </Tool>
            <Tool label="Quick check">
              <PluginMark color="#16ee16" bolt />
            </Tool>
            <Tool label="Stop check">
              <PluginMark color="#ee0f0f" />
            </Tool>
            <ToolGroup $pushed>
              <Tool label="Share link">
                <LinkCloud />
              </Tool>
              <Tool label="Email">
                <Mail />
              </Tool>
              <Tool label="Add people">
                <AddPerson />
              </Tool>
            </ToolGroup>
          </Toolbar>

          <OrganizeBar>
            <OrganizeTitle>Organize Pages</OrganizeTitle>
            <RangeBox>
              <Select $tall aria-label="Page range">
                <option>All Pages</option>
                <option>Even Pages</option>
                <option>Odd Pages</option>
              </Select>
              <Caret />
            </RangeBox>
            <OrganizeIcons>
              <RoundButton type="button" aria-label="Rotate left">
                <Rotate left />
              </RoundButton>
              <RoundButton type="button" aria-label="Rotate right">
                <Rotate />
              </RoundButton>
              <RoundButton type="button" aria-label="Delete">
                <Trash />
              </RoundButton>
            </OrganizeIcons>
            <Divider />
            <Actions>
              <ActionButton type="button">
                <Extract />
                Extract
              </ActionButton>
              <ActionButton type="button">
                <Insert />
                Insert
                <Caret />
              </ActionButton>
              <ActionButton type="button">
                <Replace />
                Replace
              </ActionButton>
              <ActionButton type="button">
                <Split />
                Split
              </ActionButton>
              <ActionButton type="button">
                <More />
                More
                <Caret />
              </ActionButton>
            </Actions>
            <CloseButton type="button">Close</CloseButton>
          </OrganizeBar>

          <Body>
            <Content>
              <PageGrid>
                <PageTile type="button" aria-pressed="true">
                  <Drawing />
                  <PageNumber>1</PageNumber>
                </PageTile>
              </PageGrid>
              <BottomBar>
                <CheckLabel>
                  <CheckBox
                    type="checkbox"
                    checked={multiple}
                    onChange={(e) => setMultiple(e.target.checked)}
                  />
                  Enable multiple page selection
                </CheckLabel>
                <SizeControl>
                  <SmallSize>
                    <Mountains width={20} height={11} />
                  </SmallSize>
                  <SizeSlider
                    type="range"
                    aria-label="Thumbnail size"
                    value={size}
                    onChange={(e) => setSize(Number(e.target.value))}
                  />
                  <LargeSize>
                    <Mountains width={34} height={18} />
                  </LargeSize>
                </SizeControl>
              </BottomBar>
            </Content>
            <Rail>
              {railTools.map(([label, Glyph]) => (
                <RailButton
                  type="button"
                  key={label}
                  aria-label={label}
                  $active={label === "Organize Pages"}
                >
                  <Glyph />
                </RailButton>
              ))}
            </Rail>
          </Body>
        </Window>
        <DesktopEdge />
      </DesktopRow>
    </Desktop>
  )
}

export default App
